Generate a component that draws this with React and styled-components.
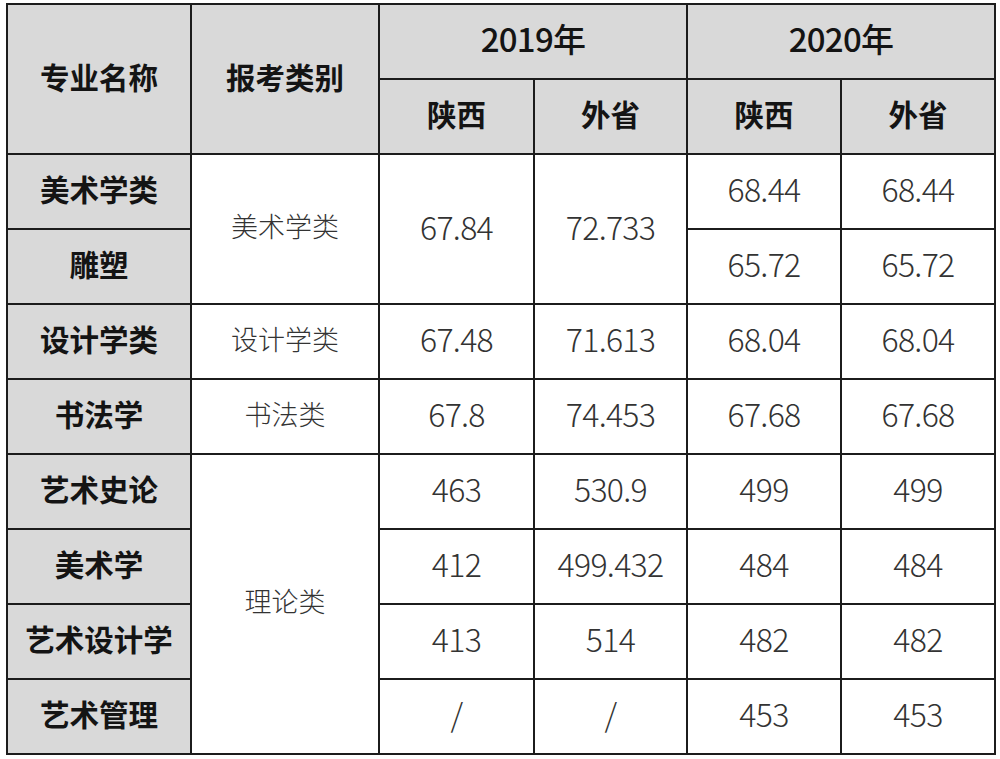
import styled, { createGlobalStyle } from "styled-components";

const Global = createGlobalStyle`
  html, body {
    margin: 0;
    padding: 0;
    background: #ffffff;
  }
  body {
    font-family: "Noto Sans CJK SC", "Noto Sans", sans-serif;
  }
`;

const Page = styled.div`
  padding: 3px 0 0 6px;
`;

const Table = styled.div`
  display: grid;
  grid-template-columns: 182px 186px 153px 151px 152px 152px;
  grid-template-rows: repeat(10, 73px);
  gap: 2px;
  padding: 2px;
  background: #1c1c1c;
  width: max-content;
`;

const Cell = styled.div`
  display: flex;
  align-items: center;
  justify-content: center;
  padding-bottom: 7px;
  box-sizing: border-box;
  background: ${(p) => (p.$gray ? "#d9d9d9" : "#ffffff")};
  color: ${(p) => (p.$bold ? "#141414" : "#333333")};
  font-size: ${(p) => (p.$num ? "32px" : "27px")};
  font-weight: ${(p) => (p.$bold ? 700 : 300)};
  letter-spacing: ${(p) => (p.$num ? "-0.7px" : "0")};
  grid-column: ${(p) => p.$col || "auto"};
  grid-row: ${(p) => p.$row || "auto"};
`;

const Head = styled(Cell).attrs({ $gray: true, $bold: true })`
  font-size: 29.5px;
`;

const Year = styled(Cell).attrs({ $gray: true })`
  color: #141414;
  font-weight: 500;
  font-size: 33px;
  letter-spacing: -0.7px;
`;

const Name = styled(Cell).attrs({ $gray: true, $bold: true })`
  font-size: 29.5px;
`;

const Num = styled(Cell).attrs({ $num: true })``;

const rows = [
  { name: "美术学类", row: 3 },
  { name: "雕塑", row: 4 },
  { name: "设计学类", row: 5 },
  { name: "书法学", row: 6 },
  { name: "艺术史论", row: 7 },
  { name: "美术学", row: 8 },
  { name: "艺术设计学", row: 9 },
  { name: "艺术管理", row: 10 },
];

const data2020 = [
  ["68.44", "68.44"],
  ["65.72", "65.72"],
  ["68.04", "68.04"],
  ["67.68", "67.68"],
  ["499", "499"],
  ["484", "484"],
  ["482", "482"],
  ["453", "453"],
];

const theory2019 = [
  ["463", "530.9"],
  ["412", "499.432"],
  ["413", "514"],
  ["/", "/"],
];

export default function App() {
  return (
    <Page>
      <Global />
      <Table>
        <Head $col="1" $row="1 / span 2">专业名称</Head>
        <Head $col="2" $row="1 / span 2">报考类别</Head>
        <Year $col="3 / span 2" $row="1">2019年</Year>
        <Year $col="5 / span 2" $row="1">2020年</Year>
        <Head $col="3" $row="2">陕西</Head>
        <Head $col="4" $row="2">外省</Head>
        <Head $col="5" $row="2">陕西</Head>
        <Head $col="6" $row="2">外省</Head>

        {rows.map((r) => (
          <Name key={r.name} $col="1" $row={`${r.row}`}>
            {r.name}
          </Name>
        ))}

        <Cell $col="2" $row="3 / span 2">美术学类</Cell>
        <Num $col="3" $row="3 / span 2">67.84</Num>
        <Num $col="4" $row="3 / span 2">72.733</Num>

        <Cell $col="2" $row="5">设计学类</Cell>
        <Num $col="3" $row="5">67.48</Num>
        <Num $col="4" $row="5">71.613</Num>

        <Cell $col="2" $row="6">书法类</Cell>
        <Num $col="3" $row="6">67.8</Num>
        <Num $col="4" $row="6">74.453</Num>

        <Cell $col="2" $row="7 / span 4">理论类</Cell>
        {theory2019.map((v, i) => [
          <Num key={`a${i}`} $col="3" $row={`${7 + i}`}>{v[0]}</Num>,
          <Num key={`b${i}`} $col="4" $row={`${7 + i}`}>{v[1]}</Num>,
        ])}

        {data2020.map((v, i) => [
          <Num key={`c${i}`} $col="5" $row={`${3 + i}`}>{v[0]}</Num>,
          <Num key={`d${i}`} $col="6" $row={`${3 + i}`}>{v[1]}</Num>,
        ])}
      </Table>
    </Page>
  );
}
